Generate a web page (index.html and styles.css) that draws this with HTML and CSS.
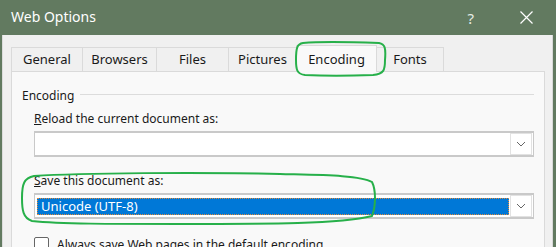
FILE: index.html
```html
<!DOCTYPE html>
<html lang="en">
<head>
    <meta charset="UTF-8">
    <title>Web Options</title>
    <link rel="stylesheet" href="styles.css">
</head>
<body>
    <div class="titlebar">
        <div class="title">Web Options</div>
        <div class="title-buttons">
            <span class="help">?</span>
            <span class="close">
                <svg width="13" height="13" viewBox="0 0 13 13"><path d="M0.5 0.5 L12.5 12.5 M12.5 0.5 L0.5 12.5" stroke="#fff" stroke-width="1.2" fill="none"/></svg>
            </span>
        </div>
    </div>

    <div class="window">
        <div class="tabs">
            <div class="tab t-general">General</div>
            <div class="tab t-browsers">Browsers</div>
            <div class="tab t-files">Files</div>
            <div class="tab t-pictures">Pictures</div>
            <div class="tab t-encoding active">Encoding</div>
            <div class="tab t-fonts">Fonts</div>
        </div>

        <div class="panel">
            <div class="group-title">
                <span>Encoding</span>
                <div class="group-line"></div>
            </div>

            <div class="field">
                <div class="label"><u>R</u>eload the current document as:</div>
                <div class="combo">
                    <div class="combo-value"></div>
                    <div class="combo-btn">
                        <svg width="10" height="6" viewBox="0 0 10 6"><path d="M1 1 L5 5 L9 1" stroke="#666" stroke-width="1" fill="none"/></svg>
                    </div>
                </div>
            </div>

            <div class="field field-save">
                <div class="label"><u>S</u>ave this document as:</div>
                <div class="combo">
                    <div class="combo-value selected">Unicode (UTF-8)</div>
                    <div class="combo-btn">
                        <svg width="10" height="6" viewBox="0 0 10 6"><path d="M1 1 L5 5 L9 1" stroke="#666" stroke-width="1" fill="none"/></svg>
                    </div>
                </div>
            </div>

            <div class="check-row">
                <div class="checkbox"></div>
                <div class="check-label">Always save Web pages in the default encoding</div>
            </div>
        </div>
    </div>

    <!-- hand-drawn annotation marks -->
    <svg class="mark mark-tab" width="96" height="38" viewBox="0 0 96 38">
        <path d="M10 3 C30 1 60 2 86 3 C92 4 93 8 92 20 C92 30 91 34 80 35 C55 36 30 36 12 35 C4 34 3 30 3 20 C3 8 4 4 10 3 Z" stroke="#27b04a" stroke-width="2" fill="none"/>
    </svg>
    <svg class="mark mark-save" width="362" height="58" viewBox="0 0 362 58">
        <path d="M14 6 C60 3 180 2 260 4 C300 5 340 5 352 12 C356 20 356 36 352 46 C320 54 250 54 160 54 C90 54 40 54 12 51 C3 48 2 40 2 28 C2 14 4 8 14 6 Z" stroke="#27b04a" stroke-width="2" fill="none"/>
    </svg>
</body>
</html>
```

FILE: styles.css
```css
body {
    margin: 0;
    width: 556px;
    height: 247px;
    overflow: hidden;
    background-color: #627a60;
    font-family: 'Noto Sans', 'Open Sans', Arial, sans-serif;
    font-size: 12px;
    color: #1a1a1a;
    position: relative;
}
.titlebar {
    height: 35px;
    display: flex;
    align-items: center;
    justify-content: space-between;
    color: #fff;
}
.title {
    padding-left: 11px;
    font-size: 14px;
    padding-bottom: 2px;
}
.title-buttons {
    display: flex;
    align-items: center;
    padding-right: 23px;
}
.help {
    font-size: 15px;
    color: #e6ece6;
    margin-right: 46px;
}
.close {
    display: flex;
}
.window {
    margin: 0 3px 0 2px;
    height: 212px;
    background-color: #f0f0f0;
    border-left: 1px solid #dcdcdc;
    border-right: 1px solid #d8d8d8;
    padding-top: 12px;
    box-sizing: border-box;
}
.tabs {
    display: flex;
    margin-left: 8px;
    height: 24px;
    align-items: flex-end;
}
.tab {
    height: 24px;
    box-sizing: border-box;
    border: 1px solid #dadada;
    border-bottom: none;
    border-right: none;
    background-color: #f0f0f0;
    display: flex;
    align-items: center;
    justify-content: center;
    padding-bottom: 1px;
    font-size: 13px;
}
.t-general { width: 71px; }
.t-browsers { width: 74px; }
.t-files { width: 72px; }
.t-pictures { width: 68px; }
.t-encoding { width: 81px; }
.t-fonts { width: 68px; border-right: 1px solid #dadada; }
.tab.active {
    height: 27px;
    background-color: #f9f9f9;
    border-right: 1px solid #dadada;
    position: relative;
    top: 1px;
    margin-right: -1px;
}
.panel {
    margin-left: 8px;
    width: 534px;
    height: 180px;
    box-sizing: border-box;
    background-color: #f9f9f9;
    border: 1px solid #dadada;
    padding: 14px 10px 0 10px;
}
.group-title {
    display: flex;
    align-items: center;
    height: 18px;
}
.group-line {
    flex: 1;
    height: 1px;
    background-color: #dcdcdc;
    margin: 0 0 2px 6px;
}
.field {
    margin-left: 12px;
    margin-top: 6px;
}
.field-save {
    margin-top: 15px;
}
.label {
    height: 18px;
    line-height: 18px;
}
.combo {
    margin-top: 3px;
    width: 500px;
    height: 26px;
    box-sizing: border-box;
    background-color: #fff;
    border: 1px solid #c9c9c9;
    border-top-width: 2px;
    border-bottom-width: 2px;
    display: flex;
    align-items: center;
    padding: 0 1px 0 2px;
}
.combo-value {
    flex: 1;
    height: 17px;
    line-height: 15px;
    padding-left: 3px;
    box-sizing: border-box;
}
.combo-value.selected {
    background-color: #0078d7;
    color: #fff;
    border: 1px dotted #e08a3a;
    font-size: 13px;
}
.combo-btn {
    width: 22px;
    height: 22px;
    box-sizing: border-box;
    border: 1px solid #e2e2e2;
    background-color: #fff;
    display: flex;
    align-items: center;
    justify-content: center;
    margin-left: 1px;
}
.check-row {
    display: flex;
    align-items: center;
    margin: 17px 0 0 12px;
}
.checkbox {
    width: 13px;
    height: 13px;
    border: 1px solid #666;
    border-radius: 2px;
    background-color: #fff;
    margin-right: 8px;
}
.mark {
    position: absolute;
}
.mark-tab {
    left: 293px;
    top: 40px;
}
.mark-save {
    left: 20px;
    top: 170px;
}
```
